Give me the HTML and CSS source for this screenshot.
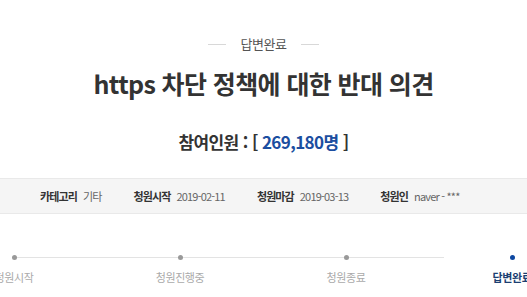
FILE: index.html
```html
<!doctype html>
<html lang="ko">
<head>
    <meta charset="UTF-8">
    <meta name="viewport" content="width=device-width, initial-scale=1.0">
    <title>청원 상세</title>
    <link rel="stylesheet" href="styles.css">
</head>
<body>
    <div class="petition">
        <div class="status">
            <span class="status-line"></span>
            <span class="status-text">답변완료</span>
            <span class="status-line"></span>
        </div>
        <h1 class="title">https 차단 정책에 대한 반대 의견</h1>
        <p class="count">참여인원 : [ <span class="count-num">269,180명</span> ]</p>

        <div class="info">
            <div class="info-item"><span class="info-label">카테고리</span><span class="info-value">기타</span></div>
            <div class="info-item"><span class="info-label">청원시작</span><span class="info-value">2019-02-11</span></div>
            <div class="info-item"><span class="info-label">청원마감</span><span class="info-value">2019-03-13</span></div>
            <div class="info-item"><span class="info-label">청원인</span><span class="info-value">naver - ***</span></div>
        </div>

        <ol class="steps">
            <li class="step"><span class="dot"></span><span class="step-name">청원시작</span></li>
            <li class="step"><span class="dot"></span><span class="step-name">청원진행중</span></li>
            <li class="step"><span class="dot"></span><span class="step-name">청원종료</span></li>
            <li class="step active"><span class="dot"></span><span class="step-name">답변완료</span></li>
        </ol>
    </div>
</body>
</html>
```

FILE: styles.css
```css
body {
    margin: 0;
    font-family: "Noto Sans CJK KR", "Noto Sans", sans-serif;
    color: #333;
    background: #fff;
    overflow: hidden;
}
.petition {
    width: 527px;
    padding-top: 34px;
}
.status {
    display: flex;
    justify-content: center;
    align-items: center;
    gap: 15px;
    height: 20px;
}
.status-line {
    width: 18px;
    height: 1px;
    background-color: #d8d8d8;
}
.status-text {
    font-size: 13px;
    line-height: 20px;
    color: #555;
    letter-spacing: -0.5px;
}
.title {
    margin: 0;
    margin-top: 12px;
    text-align: center;
    font-size: 25px;
    line-height: 34px;
    font-weight: bold;
    color: #333;
    letter-spacing: -0.6px;
}
.count {
    margin: 0;
    margin-top: 29px;
    text-align: center;
    font-size: 17px;
    line-height: 26px;
    font-weight: bold;
    color: #333;
    letter-spacing: -0.6px;
}
.count-num {
    color: #1b4ea0;
}
.info {
    display: flex;
    align-items: center;
    gap: 32px;
    margin-top: 23px;
    height: 34px;
    padding-left: 40px;
    background-color: #f5f5f5;
    border-top: 1px solid #e9e9e9;
    border-bottom: 1px solid #e9e9e9;
    font-size: 11px;
    line-height: 16px;
}
.info-item {
    display: flex;
    gap: 6px;
    white-space: nowrap;
}
.info-label {
    font-weight: bold;
    color: #333;
    letter-spacing: -0.9px;
}
.info-value {
    color: #666;
    letter-spacing: -0.8px;
}
.steps {
    position: relative;
    display: grid;
    grid-template-columns: repeat(4, 166px);
    margin: 0;
    margin-top: 41px;
    margin-left: -69px;
    padding: 0;
    list-style: none;
}
.steps::before {
    content: "";
    position: absolute;
    top: 2px;
    left: 83px;
    right: 83px;
    height: 1px;
    background-color: #e3e3e3;
}
.step {
    position: relative;
    display: flex;
    flex-direction: column;
    align-items: center;
    gap: 9px;
}
.dot {
    width: 5px;
    height: 5px;
    border-radius: 50%;
    background-color: #999;
}
.step-name {
    font-size: 11px;
    line-height: 16px;
    color: #aaa;
    letter-spacing: -0.4px;
}
.active .dot {
    background-color: #0d47a1;
}
.active .step-name {
    color: #1c3f72;
    font-weight: bold;
}
```
